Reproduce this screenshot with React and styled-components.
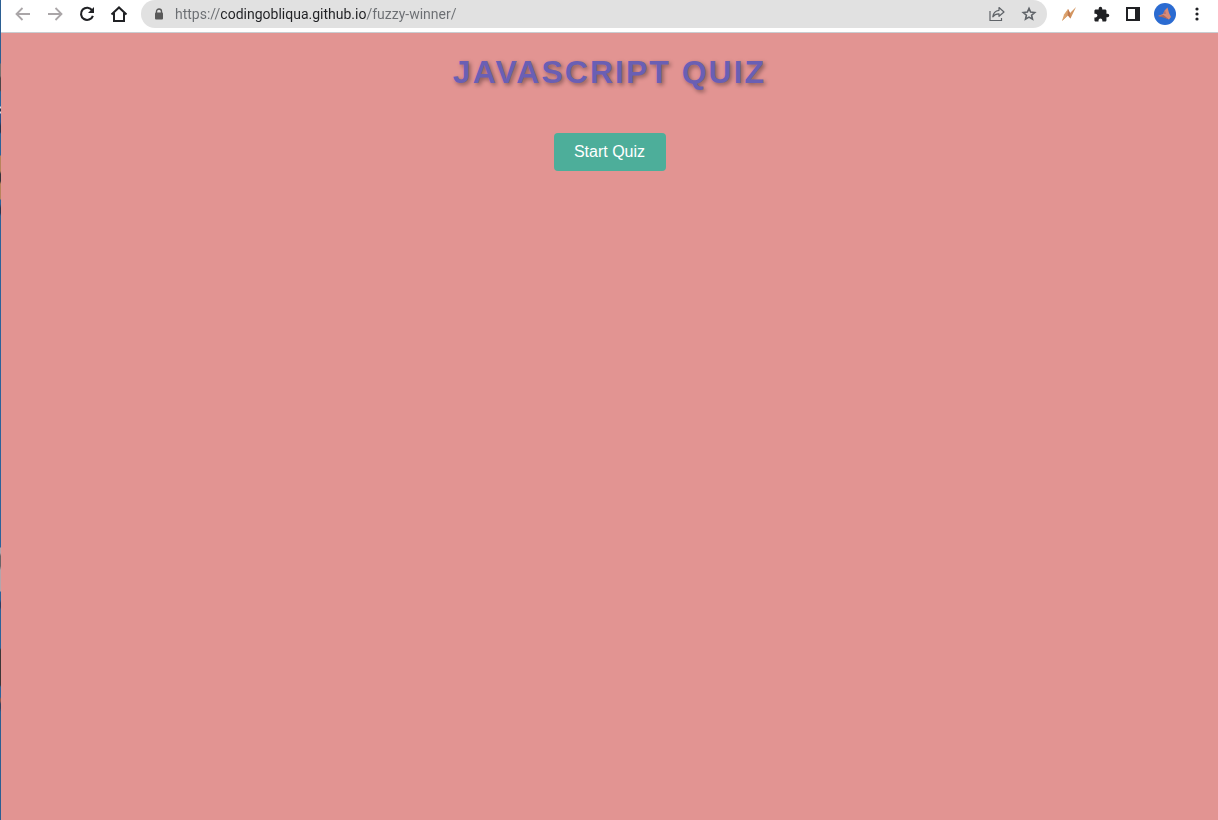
import React from "react";
import styled, { createGlobalStyle } from "styled-components";
import { MdExtension } from "react-icons/md";

const GlobalStyle = createGlobalStyle`
  * { box-sizing: border-box; }
  html, body, #root { min-height: 100vh; }
  body { margin: 0; background: #e29492; }
`;

const Browser = styled.div`
  display: flex;
  min-height: 100vh;
`;

const DesktopEdge = styled.div`
  flex: none;
  width: 1px;
  background: linear-gradient(
    #2b5f93 0 63px, #77706f 64px 76px, #4d4548 78px 90px, #2b639b 92px 106px,
    #d5dbe4 107px 108px, #27344f 109px 111px, #d5dbe4 112px 113px, #27508a 114px 122px,
    #27344f 126px 132px, #2b639b 134px 155px, #b9835b 156px 171px, #35333b 174px 181px,
    #b9835b 184px 199px, #2b639b 200px 204px, #27344f 208px 213px, #2b639b 216px 547px,
    #b3a5ac 548px 553px, #6a6467 556px 566px, #b3a5ac 570px 591px, #2b639b 592px 600px,
    #2a3d63 603px 607px, #2b639b 610px 648px, #3b3637 650px 685px, #2b639b 687px 697px,
    #8f5b50 699px 701px, #31415f 704px 708px, #2b5f93 712px
  );
`;

const Window = styled.div`
  flex: 1;
  min-width: 0;
  display: flex;
  flex-direction: column;
`;

const Toolbar = styled.header`
  display: flex;
  align-items: center;
  gap: 6px;
  padding: 0 5px 4px 6px;
  background: #fff;
  border-bottom: 1px solid #c9cdd1;
`;

const Group = styled.div`
  display: flex;
  flex: none;
`;

const IconButton = styled.button`
  flex: none;
  display: flex;
  align-items: center;
  justify-content: center;
  width: 32px;
  height: 28px;
  padding: 0;
  border: 0;
  background: none;
  color: ${({ $color }) => $color || "#202124"};
`;

const AddressBar = styled.form`
  flex: 1;
  min-width: 0;
  display: flex;
  align-items: center;
  padding: 0 2px;
  border-radius: 14px;
  background: #e1e1e1;
`;

const AddressInput = styled.input`
  flex: 1;
  min-width: 0;
  height: 28px;
  padding: 0;
  border: 0;
  outline: 0;
  font: 14px/20px Roboto, sans-serif;
  background: linear-gradient(90deg, #6b6e72 0 46px, #202124 46px 192px, #6b6e72 192px);
  background-clip: text;
  -webkit-background-clip: text;
  color: transparent;
`;

const Page = styled.main`
  flex: 1;
  display: flex;
  flex-direction: column;
  align-items: center;
  padding-top: 20px;
  background: #e29492;
  font-family: Arial, "Liberation Sans", sans-serif;
`;

const Title = styled.h1`
  margin: 0 0 42px;
  font-size: 32px;
  line-height: 38px;
  letter-spacing: 2px;
  text-transform: uppercase;
  text-shadow: 2px 2px 4px rgba(0, 0, 0, 0.4);
  color: #6a5fb4;
`;

const StartButton = styled.button`
  min-width: 112px;
  padding: 10px 20px;
  border: 0;
  border-radius: 4px;
  background: #4dae9a;
  color: #fff;
  font: 16px/18px Arial, "Liberation Sans", sans-serif;
`;

const Arrow = ({ forward }) => (
  <svg width="16" height="16" viewBox="0 0 16 16" fill="none" stroke="currentColor" strokeWidth="1.8">
    <path d={forward ? "M1 8H14M8.5 2L14.5 8L8.5 14" : "M15 8H2M7.5 2L1.5 8L7.5 14"} />
  </svg>
);

const ReloadIcon = () => (
  <svg width="16" height="16" viewBox="0 0 16 16">
    <path d="M13.2 4.4A6.1 6.1 0 1 0 13.9 9.8" fill="none" stroke="currentColor" strokeWidth="2.1" />
    <path d="M15 1V7H9Z" fill="currentColor" />
  </svg>
);

const HomeIcon = () => (
  <svg width="18" height="18" viewBox="0 0 18 18" fill="none" stroke="currentColor" strokeWidth="2">
    <path d="M1.5 9.5L9 2.4L16.5 9.5M4 8V16H14V8" />
  </svg>
);

const LockIcon = () => (
  <svg width="10" height="12" viewBox="0 0 10 12">
    <path d="M2.5 6V3.5a2.5 2.5 0 0 1 5 0V6" fill="none" stroke="currentColor" strokeWidth="1.4" />
    <rect x="1" y="4.5" width="8" height="7" rx="1" fill="currentColor" />
  </svg>
);

const ShareIcon = () => (
  <svg width="16" height="16" viewBox="0 0 16 16" fill="none" stroke="currentColor" strokeWidth="1.2">
    <path d="M1 5V14.5H12.5V12" />
    <path d="M10 1.5L15 6L10 10.3V7.8C7.2 7.7 5.3 8.6 3.8 10.8C4.2 7.2 6.2 4.8 10 4.3Z" strokeLinejoin="round" />
  </svg>
);

const StarIcon = () => (
  <svg width="16" height="16" viewBox="0 0 16 16" fill="none" stroke="currentColor" strokeWidth="1.6">
    <path d="M8 2.4L9.6 6.1L13.7 6.5L10.6 9.2L11.5 13.2L8 11.1L4.5 13.2L5.4 9.2L2.3 6.5L6.4 6.1Z" />
  </svg>
);

const BoltIcon = () => (
  <svg width="16" height="16" viewBox="0 0 16 16">
    <path d="M7 3L1 15L7 9.5L9.5 12.5L15 1L9 7Z" fill="#d39560" />
    <path d="M7 3L7 9.5L9.5 12.5L9 7Z" fill="#c07a50" />
    <path d="M7 3L3 8.5L1 15L5 11Z" fill="#dca36f" />
  </svg>
);

const SidePanelIcon = () => (
  <svg width="14" height="14" viewBox="0 0 14 14" fill="currentColor">
    <path fillRule="evenodd" d="M0 0H14V14H0ZM2 2V12H9V2Z" />
  </svg>
);

const AvatarIcon = () => (
  <svg width="22" height="22" viewBox="0 0 22 22">
    <circle cx="11" cy="11" r="11" fill="#2b6bd1" />
    <path d="M13.5 4.5L11 7L9 11L4 13L9.5 14L15 16.5L17 14L15 10Z" fill="#d98b78" />
    <path d="M4 13L9.5 12L12 14L15 16.5L9.5 14.5Z" fill="#a9675f" />
    <path d="M11 7L12 11L9 11Z" fill="#b57372" />
  </svg>
);

const MenuIcon = () => (
  <svg width="4" height="14" viewBox="0 0 4 14" fill="currentColor">
    <circle cx="2" cy="2" r="1.6" />
    <circle cx="2" cy="7" r="1.6" />
    <circle cx="2" cy="12" r="1.6" />
  </svg>
);

export default function App() {
  return (
    <Browser>
      <GlobalStyle />
      <DesktopEdge />
      <Window>
        <Toolbar>
          <Group>
            <IconButton aria-label="Back" $color="#aaa6a8"><Arrow /></IconButton>
            <IconButton aria-label="Forward" $color="#aaa6a8"><Arrow forward /></IconButton>
            <IconButton aria-label="Reload"><ReloadIcon /></IconButton>
            <IconButton aria-label="Home"><HomeIcon /></IconButton>
          </Group>
          <AddressBar onSubmit={(event) => event.preventDefault()}>
            <IconButton type="button" aria-label="Site information" $color="#5a5a5a"><LockIcon /></IconButton>
            <AddressInput
              type="text"
              aria-label="Address"
              spellCheck={false}
              defaultValue="https://codingobliqua.github.io/fuzzy-winner/"
            />
            <IconButton type="button" aria-label="Share" $color="#5f6368"><ShareIcon /></IconButton>
            <IconButton type="button" aria-label="Bookmark" $color="#5f6368"><StarIcon /></IconButton>
          </AddressBar>
          <Group>
            <IconButton aria-label="Bolt extension"><BoltIcon /></IconButton>
            <IconButton aria-label="Extensions"><MdExtension size={17} /></IconButton>
            <IconButton aria-label="Side panel"><SidePanelIcon /></IconButton>
            <IconButton aria-label="Profile"><AvatarIcon /></IconButton>
            <IconButton aria-label="Menu"><MenuIcon /></IconButton>
          </Group>
        </Toolbar>
        <Page>
          <Title>JavaScript Quiz</Title>
          <StartButton>Start Quiz</StartButton>
        </Page>
      </Window>
    </Browser>
  );
}
